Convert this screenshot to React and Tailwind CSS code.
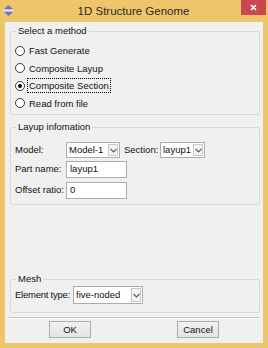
const Chevron = () => (
    <svg width="7" height="5" viewBox="0 0 7 5">
        <path d="M0.5 0.8 L3.5 4 L6.5 0.8" fill="none" stroke="#555" strokeWidth="1.1" />
    </svg>
);

const Select = ({ value, width, height = "h-[16px]" }) => (
    <div className={`flex ${width} ${height} border border-[#acacac] bg-white`}>
        <span className="flex-1 pl-[2px] flex items-center whitespace-nowrap overflow-hidden">{value}</span>
        <span className="w-[10px] my-px mr-px flex items-center justify-center bg-[#f3f3f3] border border-[#c9c9c9]">
            <Chevron />
        </span>
    </div>
);

const Radio = ({ label, checked, focused }) => (
    <div className="h-[17.5px] flex items-center pl-[4px]">
        <span className="w-[10px] h-[10px] rounded-full border border-[#3c3c3c] bg-white flex items-center justify-center">
            {checked && <span className="w-[4px] h-[4px] rounded-full bg-black"></span>}
        </span>
        <span
            className={`ml-[2px] px-px leading-[13px] border border-dotted ${focused ? "border-black" : "border-transparent"}`}
        >
            {label}
        </span>
    </div>
);

const Group = ({ title, className, children }) => (
    <fieldset className={`ml-[5px] mr-[3px] border border-[#d9d9d9] rounded-[2px] ${className}`}>
        <legend className="ml-[5px] px-[2px] leading-[12px]">{title}</legend>
        {children}
    </fieldset>
);

export default function App() {
    return (
        <div className="w-[268px] h-[348px] bg-[#efc56b] flex flex-col font-['Liberation_Sans',Arial,sans-serif] text-[9.5px] text-[#111]">
            {/* title bar */}
            <div className="h-[22px] flex items-start">
                <svg className="ml-[3px] mt-[5px]" width="11" height="11" viewBox="0 0 11 11">
                    <polygon points="5.5,0 10.5,4.6 0.5,4.6" fill="#6d74c9" />
                    <polygon points="0.5,6.4 10.5,6.4 5.5,11" fill="#6d74c9" />
                    <rect x="0" y="4.6" width="11" height="1.8" fill="#e9e9f5" />
                </svg>
                <div className="flex-1 pl-[12px] text-center text-[11.5px] leading-[22px] text-[#2a2a2a]">
                    1D Structure Genome
                </div>
                <div className="mr-[2px] w-[25px] h-[15px] bg-[#c9484f] flex items-center justify-center">
                    <svg width="7" height="7" viewBox="0 0 7 7">
                        <path d="M1 1 L6 6 M6 1 L1 6" stroke="#fff" strokeWidth="1.6" />
                    </svg>
                </div>
            </div>

            {/* client area */}
            <div className="flex-1 mx-[5px] mb-[5px] bg-[#f0f0f0] flex flex-col">
                <Group title="Select a method" className="mt-[3px] pt-[5px] pb-[2px]">
                    <Radio label="Fast Generate" />
                    <Radio label="Composite Layup" />
                    <Radio label="Composite Section" checked focused />
                    <Radio label="Read from file" />
                </Group>

                <Group title="Layup infomation" className="mt-[6px] pt-[9px] pb-[5px]">
                    <div className="h-[16px] flex items-center pl-[4px]">
                        <span className="w-[51px]">Model:</span>
                        <Select value="Model-1" width="w-[54px]" />
                        <span className="ml-[4px] w-[36px]">Section:</span>
                        <Select value="layup1" width="w-[45px]" />
                    </div>
                    <div className="mt-[3px] h-[17px] flex items-center pl-[4px]">
                        <span className="w-[51px]">Part name:</span>
                        <div className="w-[61px] h-[17px] border border-[#abadb3] bg-white pl-[3px] flex items-center">layup1</div>
                    </div>
                    <div className="mt-[4px] h-[17px] flex items-center pl-[4px]">
                        <span className="w-[51px]">Offset ratio:</span>
                        <div className="w-[61px] h-[17px] border border-[#abadb3] bg-white pl-[3px] flex items-center">0</div>
                    </div>
                </Group>

                <div className="flex-1"></div>

                <Group title="Mesh" className="pt-[1px] pb-[8px]">
                    <div className="h-[18px] flex items-center pl-[4px]">
                        <span className="w-[58px] whitespace-nowrap tracking-[-0.25px]">Element type:</span>
                        <Select value="five-noded" width="w-[70px]" height="h-[18px]" />
                    </div>
                </Group>

                <div className="mt-[4px] ml-[3px] mr-[3px] h-px bg-[#c6c6c6]"></div>
                <div className="ml-[3px] mr-[3px] h-px bg-white"></div>

                <div className="mt-[2px] mb-[5px] flex">
                    <button className="ml-[44px] w-[42px] h-[17px] border border-[#adadad] bg-gradient-to-b from-[#f2f2f2] to-[#e3e3e3] leading-[15px]">
                        OK
                    </button>
                    <button className="ml-[86px] w-[42px] h-[17px] border border-[#adadad] bg-gradient-to-b from-[#f2f2f2] to-[#e3e3e3] leading-[15px]">
                        Cancel
                    </button>
                </div>
            </div>
        </div>
    );
}
